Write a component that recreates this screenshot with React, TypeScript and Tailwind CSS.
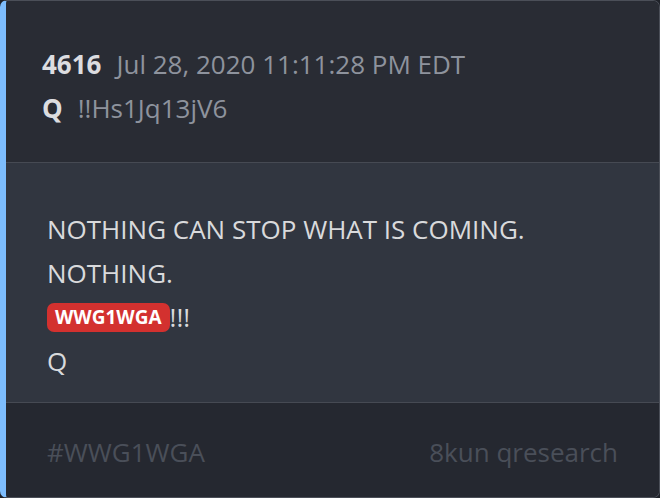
import React from 'react';

export default function App() {
  return (
    <div className="w-[660px] h-[498px] bg-[#1f2229]" style={{ fontFamily: '"Open Sans", "Noto Sans", sans-serif' }}>
      <div className="w-full h-full rounded-[7px] border border-[#4b4f58] border-l-[6px] border-l-[#7dbdfd] overflow-hidden flex flex-col">
        {/* Header */}
        <div className="h-[162px] bg-[#292c34] pl-[36px] pt-[41px] border-b border-[#464a53]">
          <div className="flex items-baseline h-[44px] leading-[44px] text-[26px]">
            <span className="font-bold text-[#dcdde0]">4616</span>
            <span className="ml-[15px] text-[#8e939d]">Jul 28, 2020 11:11:28 PM EDT</span>
          </div>
          <div className="flex items-baseline h-[44px] leading-[44px] text-[26px]">
            <span className="font-bold text-[#dcdde0]">Q</span>
            <span className="ml-[15px] text-[#8e939d]">!!Hs1Jq13jV6</span>
          </div>
        </div>

        {/* Body */}
        <div className="h-[240px] bg-[#313640] pl-[41px] pt-[44px] border-b border-[#464a53] text-[26px] text-[#d9dadc]">
          <p className="leading-[44px]">NOTHING CAN STOP WHAT IS COMING.</p>
          <p className="leading-[44px]">NOTHING.</p>
          <p className="leading-[44px] h-[44px] flex items-center">
            <span className="bg-[#d3312f] text-white font-bold text-[19px] leading-[29px] px-[8px] rounded-[7px]">WWG1WGA</span>
            <span>!!!</span>
          </p>
          <p className="leading-[44px]">Q</p>
        </div>

        {/* Footer */}
        <div className="flex-1 bg-[#252830] flex items-center justify-between pl-[41px] pr-[41px] pt-[4px] text-[26px] text-[#4a4f59]">
          <span>#WWG1WGA</span>
          <span>8kun qresearch</span>
        </div>
      </div>
    </div>
  );
}
